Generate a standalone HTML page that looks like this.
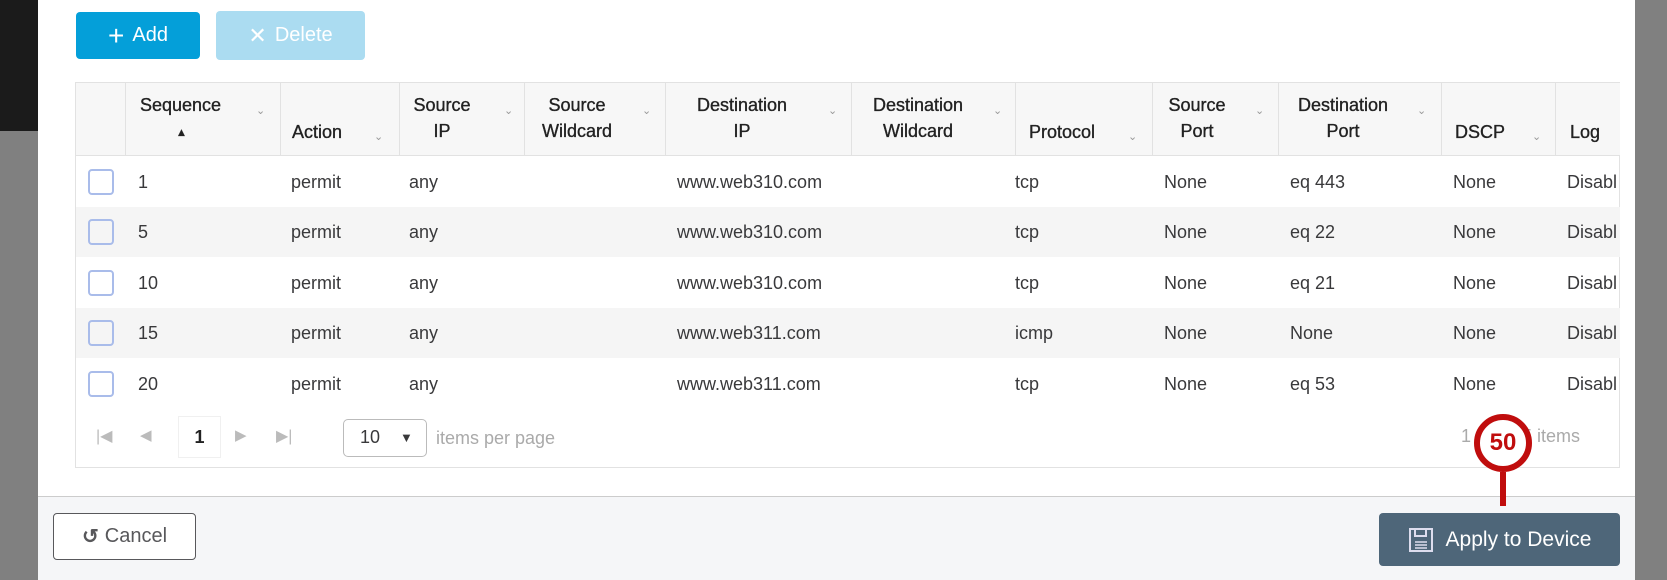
<!DOCTYPE html>
<html><head><style>
*{margin:0;padding:0;box-sizing:border-box}
body{width:1667px;height:580px;position:relative;overflow:hidden;background:#fff;font-family:"Liberation Sans",sans-serif;color:#39393b}
.a{position:absolute}
.btn{position:absolute;border-radius:4px;color:#fff;font-size:20px;display:flex;align-items:center;justify-content:center}
.th{position:absolute;top:82px;height:74px;font-size:18px;font-weight:normal;color:#222;-webkit-text-stroke:0.35px #222;line-height:26px;border-left:1px solid #e2e2e2}
.th span{position:absolute}
.chev{position:absolute;font-size:11px;color:#999;font-weight:normal;-webkit-text-stroke:0}
.row{position:absolute;left:76px;width:1544px;height:50px;font-size:18px}
.row div{position:absolute;top:15px;white-space:nowrap}
.cb{width:26px;height:26px;border:2px solid #a9bcea;border-radius:4px;top:12px!important;left:12px}
</style></head><body>
<div class="a" style="left:0;top:0;width:38px;height:131px;background:#1b1b1b"></div>
<div class="a" style="left:0;top:131px;width:38px;height:449px;background:#808080"></div>
<div class="a" style="left:1635px;top:0;width:32px;height:580px;background:#808080"></div>

<div class="btn" style="left:76px;top:12px;width:124px;height:47px;background:#049fd9"><span style="font-size:28px;font-weight:200;margin-right:8px">+</span>Add</div>
<div class="btn" style="left:216px;top:11px;width:149px;height:49px;background:#abdcf1"><span style="font-size:22px;margin-right:8px">✕</span>Delete</div>

<div class="a" style="left:75px;top:82px;width:1545px;height:386px;border:1px solid #e2e2e2"></div>
<div class="a" style="left:76px;top:83px;width:1544px;height:73px;background:#f7f7f7;border-bottom:1px solid #e2e2e2"></div>
<div class="th" style="left:125px;width:155px"><span style="left:14px;top:10px">Sequence</span><span style="left:50px;top:38px;font-size:11px">▲</span><span class="chev" style="left:130px;top:16px">⌄</span></div>
<div class="th" style="left:280px;width:119px"><span style="left:11px;top:37px">Action</span><span class="chev" style="left:93px;top:42px">⌄</span></div>
<div class="th" style="left:399px;width:125px"><span style="left:12px;top:10px;text-align:center;width:60px">Source<br>IP</span><span class="chev" style="left:104px;top:16px">⌄</span></div>
<div class="th" style="left:524px;width:141px"><span style="left:12px;top:10px;text-align:center;width:80px">Source<br>Wildcard</span><span class="chev" style="left:117px;top:16px">⌄</span></div>
<div class="th" style="left:665px;width:186px"><span style="left:24px;top:10px;text-align:center;width:104px">Destination<br>IP</span><span class="chev" style="left:162px;top:16px">⌄</span></div>
<div class="th" style="left:851px;width:164px"><span style="left:14px;top:10px;text-align:center;width:104px">Destination<br>Wildcard</span><span class="chev" style="left:141px;top:16px">⌄</span></div>
<div class="th" style="left:1015px;width:137px"><span style="left:13px;top:37px">Protocol</span><span class="chev" style="left:112px;top:42px">⌄</span></div>
<div class="th" style="left:1152px;width:126px"><span style="left:12px;top:10px;text-align:center;width:64px">Source<br>Port</span><span class="chev" style="left:102px;top:16px">⌄</span></div>
<div class="th" style="left:1278px;width:163px"><span style="left:12px;top:10px;text-align:center;width:104px">Destination<br>Port</span><span class="chev" style="left:138px;top:16px">⌄</span></div>
<div class="th" style="left:1441px;width:114px"><span style="left:13px;top:37px">DSCP</span><span class="chev" style="left:90px;top:42px">⌄</span></div>
<div class="th" style="left:1555px;width:65px"><span style="left:14px;top:37px">Log</span></div>

<div class="row" style="top:157px"><div class="cb"></div><div style="left:62px">1</div><div style="left:215px">permit</div><div style="left:333px">any</div><div style="left:601px">www.web310.com</div><div style="left:939px">tcp</div><div style="left:1088px">None</div><div style="left:1214px">eq 443</div><div style="left:1377px">None</div><div style="left:1491px">Disabl</div></div>
<div class="row" style="top:207px;background:#f5f5f5"><div class="cb"></div><div style="left:62px">5</div><div style="left:215px">permit</div><div style="left:333px">any</div><div style="left:601px">www.web310.com</div><div style="left:939px">tcp</div><div style="left:1088px">None</div><div style="left:1214px">eq 22</div><div style="left:1377px">None</div><div style="left:1491px">Disabl</div></div>
<div class="row" style="top:258px"><div class="cb"></div><div style="left:62px">10</div><div style="left:215px">permit</div><div style="left:333px">any</div><div style="left:601px">www.web310.com</div><div style="left:939px">tcp</div><div style="left:1088px">None</div><div style="left:1214px">eq 21</div><div style="left:1377px">None</div><div style="left:1491px">Disabl</div></div>
<div class="row" style="top:308px;background:#f5f5f5"><div class="cb"></div><div style="left:62px">15</div><div style="left:215px">permit</div><div style="left:333px">any</div><div style="left:601px">www.web311.com</div><div style="left:939px">icmp</div><div style="left:1088px">None</div><div style="left:1214px">None</div><div style="left:1377px">None</div><div style="left:1491px">Disabl</div></div>
<div class="row" style="top:359px"><div class="cb"></div><div style="left:62px">20</div><div style="left:215px">permit</div><div style="left:333px">any</div><div style="left:601px">www.web311.com</div><div style="left:939px">tcp</div><div style="left:1088px">None</div><div style="left:1214px">eq 53</div><div style="left:1377px">None</div><div style="left:1491px">Disabl</div></div>

<div class="a" style="left:96px;top:426px;font-size:16px;color:#bbb">|◀</div>
<div class="a" style="left:140px;top:426px;font-size:15px;color:#bbb">◀</div>
<div class="a" style="left:178px;top:416px;width:43px;height:42px;border:1px solid #f0f0f0;font-size:18px;font-weight:bold;text-align:center;line-height:40px;color:#222">1</div>
<div class="a" style="left:235px;top:426px;font-size:15px;color:#bbb">▶</div>
<div class="a" style="left:276px;top:426px;font-size:16px;color:#bbb">▶|</div>
<div class="a" style="left:343px;top:419px;width:84px;height:38px;border:1px solid #bbb;border-radius:5px;font-size:18px;padding:7px 0 0 16px">10<span style="position:absolute;left:56px;top:10px;font-size:13px">▼</span></div>
<div class="a" style="left:436px;top:428px;font-size:18px;color:#aaa">items per page</div>
<div class="a" style="left:1461px;top:426px;font-size:18px;color:#aaa">1 - 5 of 5 items</div>

<div class="a" style="left:38px;top:496px;width:1597px;height:84px;background:#f5f6f8;border-top:1px solid #ccc"></div>
<div class="btn" style="left:53px;top:513px;width:143px;height:47px;border:1px solid #58585b;background:#fff;color:#58585b;font-size:20px"><span style="font-weight:bold;margin-right:6px">↺</span>Cancel</div>
<div class="btn" style="left:1379px;top:513px;width:241px;height:53px;background:#4e6679;font-size:21px">
<svg width="26" height="26" viewBox="0 0 26 26" style="margin-right:12px"><rect x="2" y="2" width="22" height="22" fill="none" stroke="#dde" stroke-width="2"/><rect x="7" y="2" width="11" height="7" fill="none" stroke="#dde" stroke-width="2"/><line x1="7" y1="15" x2="19" y2="15" stroke="#dde" stroke-width="1.5"/><line x1="7" y1="18" x2="19" y2="18" stroke="#dde" stroke-width="1.5"/><line x1="7" y1="21" x2="19" y2="21" stroke="#dde" stroke-width="1.5"/></svg>Apply to Device</div>

<div class="a" style="left:1500px;top:472px;width:6px;height:34px;background:#c00d0d"></div>
<div class="a" style="left:1474px;top:414px;width:58px;height:58px;border-radius:50%;border:6px solid #c00d0d;background:#fff;color:#c00d0d;font-weight:bold;font-size:24px;text-align:center;line-height:46px">50</div>
</body></html>
